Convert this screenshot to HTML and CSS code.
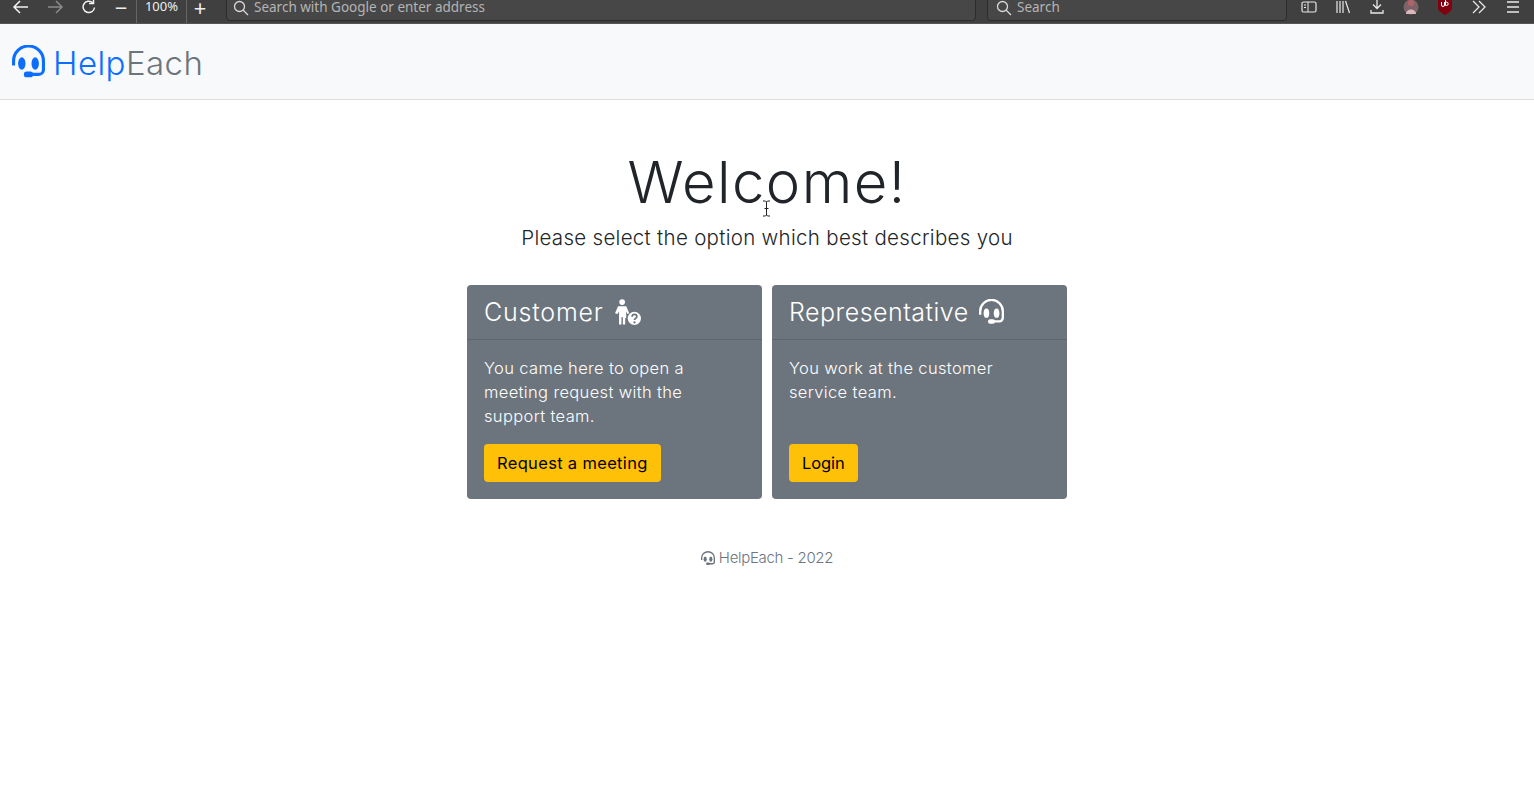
FILE: index.html
```html
<!DOCTYPE html>
<html lang="en">
<head>
  <meta charset="UTF-8">
  <meta name="viewport" content="width=device-width, initial-scale=1.0">
  <title>HelpEach</title>
  <link rel="stylesheet" href="styles.css">
</head>
<body>
<svg class="defs" width="0" height="0">
  <symbol id="headset" viewBox="0 0 32 33">
    <path d="M1.500 20v-4.500a14.500 14.500 0 0 1 29 0V24a4.500 4.500 0 0 1-4.500 4.500H17" fill="none" stroke="currentColor" stroke-width="3"/>
    <ellipse cx="9.500" cy="18" rx="3.600" ry="6"/>
    <ellipse cx="22.500" cy="18" rx="3.600" ry="6"/>
    <rect x="11.500" y="25.800" width="9" height="5.600" rx="2.800"/>
  </symbol>
</svg>

<div class="browser-bar">
  <svg class="tool" width="18" height="14" viewBox="0 0 18 14"><path d="M16 7H2M8 1 2 7l6 6" fill="none" stroke="#f2f2f2" stroke-width="1.5"/></svg>
  <svg class="tool" width="18" height="14" viewBox="0 0 18 14"><path d="M2 7h14M10 1l6 6-6 6" fill="none" stroke="#8a8a8a" stroke-width="1.5"/></svg>
  <svg class="tool tool-last" width="18" height="16" viewBox="0 0 18 16"><path d="M14.500 8.500a5.700 5.700 0 1 1-2-5M13.500 0v4.500H9" fill="none" stroke="#f2f2f2" stroke-width="1.500"/></svg>
  <div class="zoom-group">
    <span class="zoom-btn">&minus;</span>
    <span class="zoom-val">100%</span>
    <span class="zoom-btn zoom-plus">+</span>
  </div>
  <div class="field field-url">
    <svg width="16" height="16" viewBox="0 0 16 16"><circle cx="6.500" cy="6.500" r="5" fill="none" stroke="#d8d8d8" stroke-width="1.300"/><path d="m10 10 5 5" stroke="#d8d8d8" stroke-width="1.300"/></svg>
    <span>Search with Google or enter address</span>
  </div>
  <div class="field field-search">
    <svg width="16" height="16" viewBox="0 0 16 16"><circle cx="6.500" cy="6.500" r="5" fill="none" stroke="#d8d8d8" stroke-width="1.300"/><path d="m10 10 5 5" stroke="#d8d8d8" stroke-width="1.300"/></svg>
    <span>Search</span>
  </div>
  <div class="tools-right">
    <svg width="16" height="14" viewBox="0 0 16 14"><rect x="1" y="2" width="14" height="10" rx="1.500" fill="none" stroke="#e8e8e8" stroke-width="1.200"/><path d="M7 2v10M3 5h2M3 7.500h2" stroke="#e8e8e8"/></svg>
    <svg width="16" height="14" viewBox="0 0 16 14"><path d="M2 1v12M5 1v12M8 1v12M10.500 1l4 12" stroke="#e8e8e8" stroke-width="1.200" fill="none"/></svg>
    <svg width="16" height="16" viewBox="0 0 16 16"><path d="M8 0v9M4 5.500 8 9.500l4-4M2 11v3h12v-3" stroke="#e8e8e8" stroke-width="1.300" fill="none"/></svg>
    <svg width="16" height="16" viewBox="0 0 16 16"><circle cx="8" cy="8" r="7.500" fill="#7d6468"/><circle cx="8" cy="4" r="3" fill="#b5636a"/><path d="M3 15c0-6 10-6 10 0z" fill="#d9b8bc"/></svg>
    <svg width="16" height="16" viewBox="0 0 16 16"><path d="M1 0h14v9c0 3-4 5-7 7-3-2-7-4-7-7z" fill="#800010"/><path d="M4.500 3v3a1.500 1.500 0 0 0 3 0V3M8.500 1v5.500h1a1.700 1.700 0 0 0 0-3.400h-1" fill="none" stroke="#fff" stroke-width="1"/></svg>
    <svg width="16" height="14" viewBox="0 0 16 14"><path d="m2 1 6 6-6 6M8 1l6 6-6 6" fill="none" stroke="#e8e8e8" stroke-width="1.300"/></svg>
    <svg width="16" height="14" viewBox="0 0 16 14"><path d="M2 2h12M2 7h12M2 12h12" stroke="#e8e8e8" stroke-width="1.300"/></svg>
  </div>
</div>

<nav class="navbar">
  <svg class="brand-icon"><use href="#headset"/></svg>
  <a class="brand" href="#"><span class="brand-help">Help</span><span class="brand-each">Each</span></a>
</nav>

<main class="main">
  <h1 class="title">Welcome!</h1>
  <p class="lead">Please select the option which best describes you</p>

  <div class="cards">
    <div class="card">
      <div class="card-header">
        <span class="card-title">Customer</span>
        <svg class="person-icon" width="28" height="26" viewBox="1.500 0 26.500 25.500">
          <circle cx="9" cy="3" r="2.800" fill="#fff"/>
          <path d="M5 7h8l3 7-1.800.8L13 12v6.500l-1 .2V25H9.700v-7H8.300v7H6V12l-1.400 2.800L2 14z" fill="#fff"/>
          <circle cx="21" cy="19" r="6.500" fill="#fff"/>
          <path d="M18.800 17.300c0-3 4.600-3 4.600 0 0 1.700-2.300 1.700-2.300 3.300" fill="none" stroke="#6c757d" stroke-width="1.700"/>
          <circle cx="21.100" cy="23" r="1.100" fill="#6c757d"/>
        </svg>
      </div>
      <div class="card-body">
        <p class="card-text">You came here to open a meeting request with the support team.</p>
        <a class="btn btn-wide" href="#">Request a meeting</a>
      </div>
    </div>

    <div class="card">
      <div class="card-header">
        <span class="card-title title-long">Representative</span>
        <svg class="header-icon"><use href="#headset"/></svg>
      </div>
      <div class="card-body">
        <p class="card-text">You work at the customer service team.</p>
        <a class="btn" href="#">Login</a>
      </div>
    </div>
  </div>

  <footer class="footer">
    <svg class="footer-icon"><use href="#headset"/></svg>
    <span>HelpEach - 2022</span>
  </footer>
</main>

<svg class="ibeam" width="9" height="17" viewBox="0 0 9 17"><path d="M1 1h2.500L4.500 2l1-1H8M4.500 2v13M1 16h2.500l1-1 1 1H8M2.500 8.500h4" fill="none" stroke="#222" stroke-width="1"/></svg>
</body>
</html>
```

FILE: styles.css
```css
body {
  margin: 0;
  font-family: Inter, "Open Sans", sans-serif;
  color: #212529;
  background-color: #fff;
  position: relative;
  min-height: 788px;
  overflow: hidden;
}

.defs {
  position: absolute;
}

/* browser toolbar, cut at the top of the shot */
.browser-bar {
  height: 24px;
  background-color: #404040;
  border-bottom: 1px solid #555;
  box-sizing: border-box;
  display: flex;
  align-items: center;
  padding-left: 12px;
  overflow: hidden;
  font-family: "Noto Sans", sans-serif;
  font-size: 13.5px;
  color: #b4b4b4;
}
.browser-bar svg {
  flex: none;
  position: relative;
  top: -5px;
}
.tool {
  margin-right: 16px;
}
.tool-last {
  margin-right: 8px;
}
.zoom-group {
  display: flex;
  align-items: center;
  width: 130px;
  color: #eee;
}
.zoom-btn {
  font-size: 22px;
  line-height: 14px;
  width: 30px;
  text-align: center;
  position: relative;
  top: -5px;
}
.zoom-val {
  font-size: 13px;
  width: 49px;
  text-align: center;
  border-left: 1px solid #666;
  border-right: 1px solid #666;
  height: 24px;
  line-height: 12px;
}
.zoom-plus {
  width: 26px;
}
.field {
  height: 30px;
  margin-top: -12px;
  box-sizing: border-box;
  background-color: #474747;
  border: 1px solid #2c2c2c;
  border-radius: 4px;
  display: flex;
  align-items: center;
  gap: 5px;
  padding: 0 6px;
  flex: none;
}
.field svg {
  top: 2px;
}
.field span {
  position: relative;
  top: 1px;
}
.field-url {
  width: 750px;
  margin-left: -10px;
}
.field-search {
  width: 300px;
  margin-left: 11px;
  padding-left: 8px;
}
.tools-right {
  display: flex;
  align-items: center;
  gap: 18px;
  margin-left: 14px;
}

.navbar {
  height: 75px;
  background-color: #f8f9fa;
  border-bottom: 1px solid #dfdfdf;
  display: flex;
  align-items: center;
  padding-left: 12px;
  gap: 8px;
}
.brand-icon {
  width: 33px;
  height: 34px;
  fill: #0d6efd;
  color: #0d6efd;
}
.brand {
  font-size: 33px;
  font-weight: 300;
  letter-spacing: 0.45px;
  text-decoration: none;
  margin-top: 2px;
}
.brand-help {
  color: #0d6efd;
}
.brand-each {
  color: #6c757d;
}

.main {
  display: flex;
  flex-direction: column;
  align-items: center;
}
.title {
  font-size: 58px;
  font-weight: 300;
  line-height: 67px;
  letter-spacing: 1.4px;
  margin: 49px 0 0;
}
.lead {
  font-size: 20.5px;
  font-weight: 300;
  line-height: 30px;
  letter-spacing: 0.3px;
  margin: 7px 0 0;
}

.cards {
  display: flex;
  gap: 10px;
  margin-top: 32px;
}
.card {
  width: 295px;
  height: 214px;
  box-sizing: border-box;
  background-color: #6c757d;
  border-radius: 4px;
  color: #fff;
  display: flex;
  flex-direction: column;
}
.card-header {
  height: 55px;
  box-sizing: border-box;
  padding: 0 17px;
  border-bottom: 1px solid #5f676e;
  display: flex;
  align-items: center;
  gap: 10px;
  font-size: 25px;
  font-weight: 300;
}
.card-title {
  letter-spacing: 0.8px;
}
.title-long {
  letter-spacing: 0.5px;
}
.header-icon {
  width: 25px;
  height: 26px;
  fill: #fff;
  color: #fff;
}
.card-body {
  padding: 16px 17px 17px;
  flex: 1;
  display: flex;
  flex-direction: column;
  align-items: flex-start;
  justify-content: space-between;
}
.card-text {
  margin: 0;
  font-size: 16.5px;
  line-height: 24px;
  font-weight: 350;
  letter-spacing: 0.35px;
}
.btn {
  height: 38px;
  box-sizing: border-box;
  padding: 0 13px;
  display: flex;
  align-items: center;
  background-color: #ffc107;
  color: #000;
  font-size: 16.5px;
  letter-spacing: -0.1px;
  border-radius: 4px;
  text-decoration: none;
}
.btn-wide {
  letter-spacing: 0.33px;
}

.footer {
  margin-top: 48px;
  display: flex;
  align-items: center;
  gap: 4px;
  font-size: 15px;
  font-weight: 300;
  line-height: 22px;
  letter-spacing: -0.3px;
  color: #6c757d;
}
.footer-icon {
  width: 14px;
  height: 15px;
  fill: #6c757d;
  color: #6c757d;
}

/* mouse pointer caught in the shot */
.ibeam {
  position: absolute;
  left: 762px;
  top: 200px;
}
```
